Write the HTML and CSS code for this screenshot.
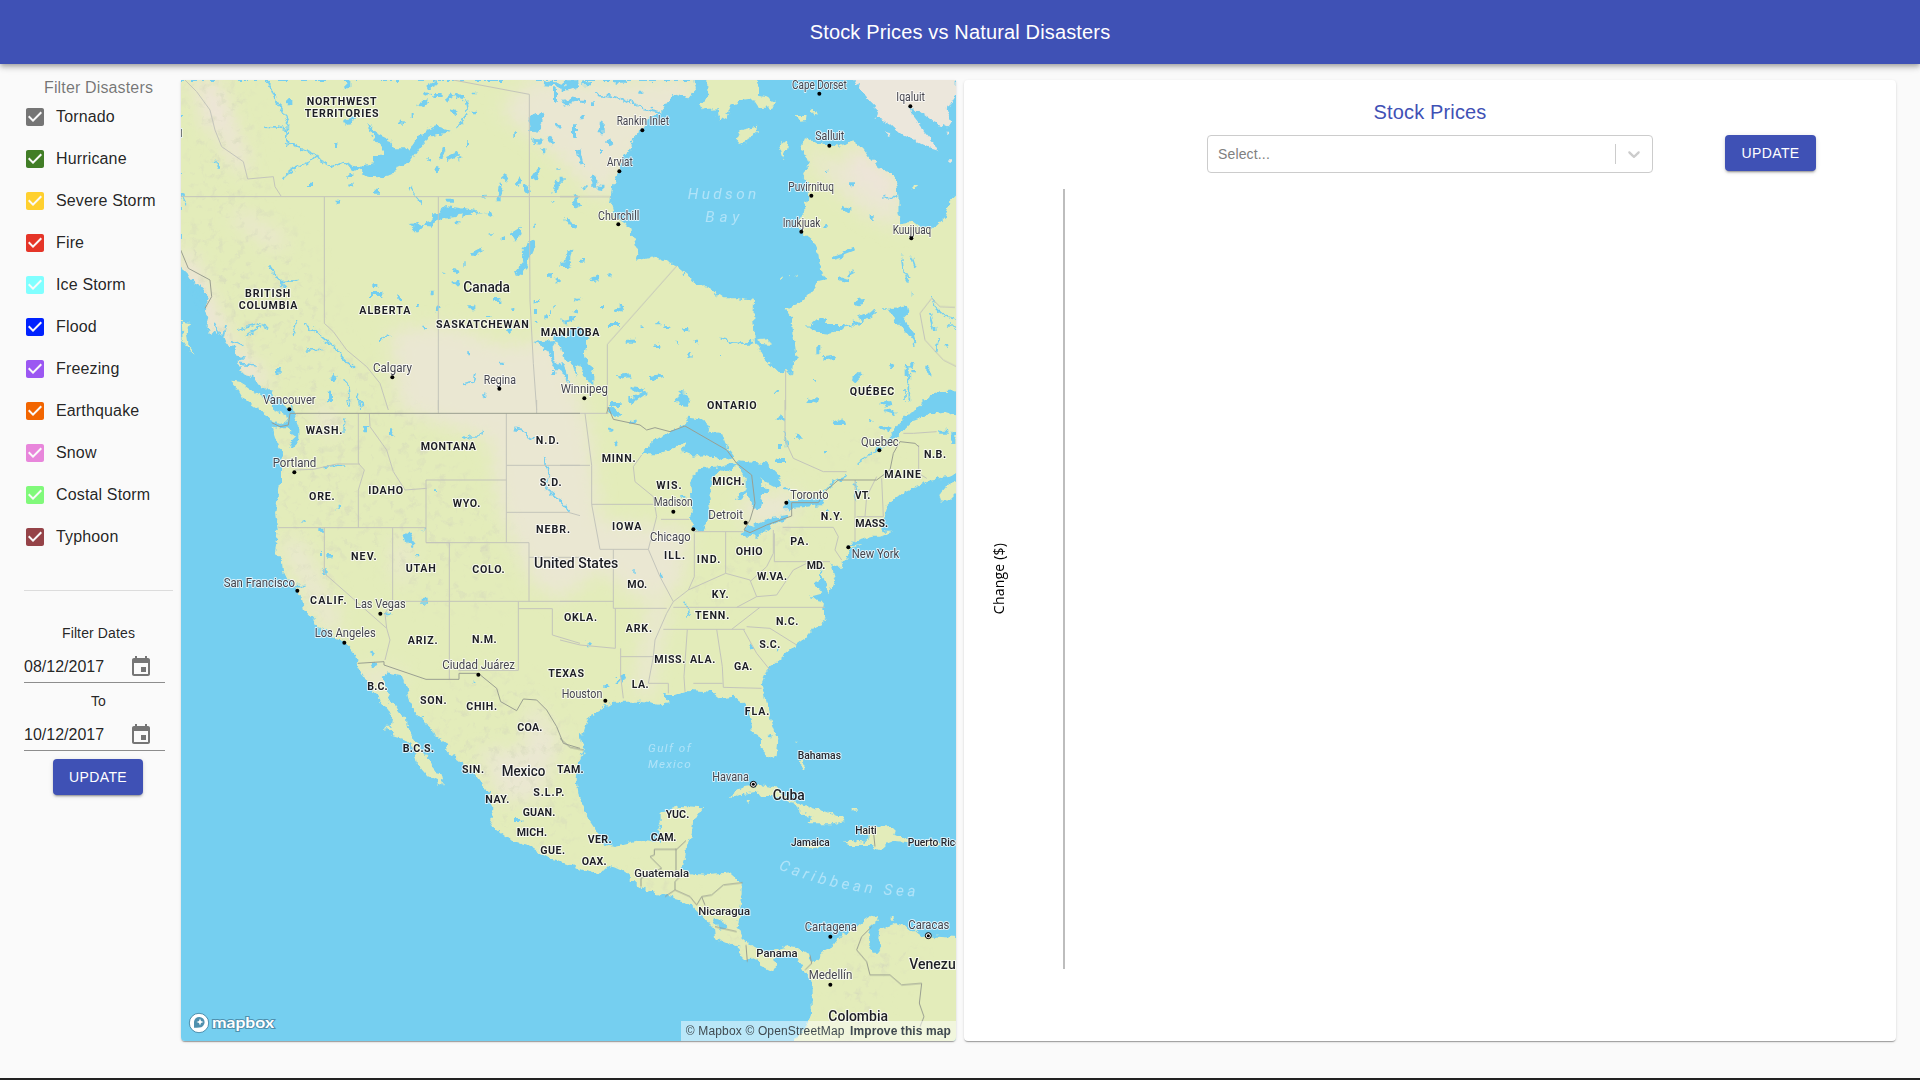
FILE: index.html
```html
<!DOCTYPE html>
<html lang="en">
<head>
<meta charset="utf-8">
<title>Stock Prices vs Natural Disasters</title>
<link rel="stylesheet" href="styles.css">
</head>
<body>
<svg width="0" height="0" class="sprite">
  <symbol id="check" viewBox="0 0 24 24"><path d="M19 3H5c-1.11 0-2 .9-2 2v14c0 1.1.89 2 2 2h14c1.11 0 2-.9 2-2V5c0-1.1-.89-2-2-2zm-9 14l-5-5 1.41-1.41L10 14.17l7.59-7.59L19 8l-9 9z"/></symbol>
  <symbol id="event" viewBox="0 0 24 24"><path d="M17 12h-5v5h5v-5zM16 1v2H8V1H6v2H5c-1.11 0-1.99.9-1.99 2L3 19c0 1.1.89 2 2 2h14c1.1 0 2-.9 2-2V5c0-1.1-.9-2-2-2h-1V1h-2zm3 18H5V8h14v11z"/></symbol>
</svg>
<header class="app-bar"><h1>Stock Prices vs Natural Disasters</h1></header>
<main class="content">
  <aside class="sidebar">
    <h2 class="legend">Filter Disasters</h2>
    <ul class="filters">
      <li class="tornado"><svg><use href="#check"/></svg>Tornado</li>
      <li class="hurricane"><svg><use href="#check"/></svg>Hurricane</li>
      <li class="severe"><svg><use href="#check"/></svg>Severe Storm</li>
      <li class="fire"><svg><use href="#check"/></svg>Fire</li>
      <li class="ice"><svg><use href="#check"/></svg>Ice Storm</li>
      <li class="flood"><svg><use href="#check"/></svg>Flood</li>
      <li class="freezing"><svg><use href="#check"/></svg>Freezing</li>
      <li class="earthquake"><svg><use href="#check"/></svg>Earthquake</li>
      <li class="snow"><svg><use href="#check"/></svg>Snow</li>
      <li class="costal"><svg><use href="#check"/></svg>Costal Storm</li>
      <li class="typhoon"><svg><use href="#check"/></svg>Typhoon</li>
    </ul>
    <hr class="divider">
    <div class="dates">
      <p>Filter Dates</p>
      <div class="date"><span>08/12/2017</span><svg><use href="#event"/></svg></div>
      <p>To</p>
      <div class="date"><span>10/12/2017</span><svg><use href="#event"/></svg></div>
      <button class="btn">UPDATE</button>
    </div>
  </aside>

  <section class="map">
  <svg class="map-canvas" viewBox="181 80 775 961">
    <defs>
      <filter id="rough" filterUnits="userSpaceOnUse" x="150" y="50" width="840" height="1020"><feTurbulence type="fractalNoise" baseFrequency=".14" numOctaves="3" seed="4"/><feDisplacementMap in="SourceGraphic" scale="8" xChannelSelector="R" yChannelSelector="G"/></filter>
      <filter id="soft" filterUnits="userSpaceOnUse" x="100" y="0" width="940" height="1120"><feGaussianBlur stdDeviation="9"/></filter>
      <filter id="relief" filterUnits="userSpaceOnUse" x="100" y="0" width="940" height="1120"><feTurbulence type="fractalNoise" baseFrequency=".11" numOctaves="3" seed="9"/><feColorMatrix values="0 0 0 0 .66  0 0 0 0 .68  0 0 0 0 .5  2 0 0 0 -1.08" result="n"/><feGaussianBlur in="SourceAlpha" stdDeviation="9" result="m"/><feComposite in="n" in2="m" operator="in"/></filter>
      <clipPath id="land-clip">
        <path transform="translate(180 80) scale(.33333)" d="M0,0H1200V990H348L338,975 325,985 310,975 300,958 275,945 278,925 250,925 235,905 215,890 195,885 178,868 175,850 192,832 172,825 165,800 140,795 130,770 105,750 92,765 80,735 85,715 72,690 88,665 70,630 55,612 30,600 20,580 0,560Z"/>
        <path transform="translate(560 80) scale(.33333)" d="M0,0H400L405,30 385,55 340,45 320,70 300,95 255,125 245,150 220,170 205,215 185,235 178,275 160,310 153,370 165,410 205,435 225,490 235,520 228,545 285,530 350,558 385,585 405,608 455,630 490,655 530,655 582,662 580,720 585,790 610,830 640,860 665,885 680,865 697,885 698,860 710,830 700,760 693,710 677,688 720,668 750,640 775,605 798,600 780,565 775,520 755,480 725,455 710,430 730,395 745,360 740,300 725,295 745,250 725,200 735,178 770,185 800,195 840,200 875,180 910,205 935,240 960,265 1010,290 1015,350 1015,400 1025,430 1055,425 1075,440 1130,440 1155,415 1165,370 1200,335V990H0Z"/>
        <path transform="translate(180 400) scale(.33333)" d="M330,-20L345,55 355,80 355,120 340,140 330,130 345,115 325,85 300,85 275,80 285,110 303,155 300,200 300,250 285,340 295,400 285,455 305,480 310,520 350,560 355,585 370,600 375,630 400,660 410,680 440,690 450,705 495,725 525,760 530,790 555,835 575,865 600,900 625,930 640,960 640,1000H685L680,975 660,940 635,905 620,870 605,830 620,820 670,830 685,880 695,925 720,950 760,985 760,1000H1200V-20Z"/>
        <path transform="translate(560 400) scale(.33333)" d="M0,0H1200V210L1170,230 1100,240 1080,255 1030,275 1000,300 980,320 975,350 965,365 975,395 1000,395 960,410 940,410 880,425 865,440 905,435 870,450 858,480 840,500 822,500 810,490 825,545 820,560 805,565 810,585 800,570 790,535 785,520 780,545 760,550 755,540 790,580 750,590 775,600 795,625 800,655 765,680 740,710 700,740 650,785 620,810 605,850 615,900 625,935 645,1000H580L570,950 555,915 525,890 480,895 455,875 390,870 350,885 310,885 330,910 300,915 240,905 160,905 115,935 85,950 70,1000H0Z"/>
        <path transform="translate(180 720) scale(.33333)" d="M733,0L755,15 765,45 805,75 800,95 830,115 850,130 850,150 890,170 915,205 930,210 925,240 940,265 930,300 945,325 990,360 1050,380 1110,415 1160,430 1200,452V255L1190,180 1195,110 1200,80V0Z"/>
        <path transform="translate(560 720) scale(.33333)" d="M0,0H80L58,30 62,70 75,90 50,130 50,190 60,245 80,285 110,330 115,365 165,378 240,360 300,365 295,330 305,310 305,275 370,258 428,262 400,300 395,345 388,370 378,380 375,420 365,450 400,462 450,465 510,460 545,490 545,520 538,560 535,590 530,620 545,650 580,680 620,700 680,680 715,685 745,705 760,730 775,715 785,695 815,680 850,640 890,620 935,590 955,585 955,600 930,620 925,640 925,670 935,695 955,695 965,680 955,650 960,630 1010,612 1050,625 1080,650 1130,650 1200,655V990H700L710,950 740,915 755,880 755,800 750,780 720,730 700,700 655,705 640,725 655,745 640,755 600,735 600,725 580,715 555,720 540,705 535,680 500,670 465,655 462,625 430,590 400,560 385,548 320,530 260,510 240,500 195,455 150,435 130,455 95,460 30,435 0,425Z"/>
      </clipPath>
    </defs>
    <rect class="sea" x="181" y="80" width="775" height="961"/>
    <g filter="url(#rough)">
      <!-- mainland -->
      <g clip-path="url(#land-clip)">
        <rect class="land" x="150" y="60" width="850" height="1000"/>
        <g filter="url(#soft)">
          <path class="plain" d="M390,330L450,325 500,345 560,340 580,400 590,430 600,520 690,530 680,590 640,600 600,570 560,600 530,580 500,510 490,440 400,410Z"/>
          <path class="plain" d="M530,80H690V120L640,150 600,200 560,160 500,110Z M800,150L900,180 900,230 860,210Z M280,540L300,540 340,620 330,640Z M395,540H408V580H395Z M360,670H400V685H360Z M530,700L560,740 540,800 520,780Z M480,750H540V800H500Z M650,600L670,600 650,700 635,690Z M740,500L800,490 790,520 745,525Z"/>
          <path class="rock" d="M185,80L220,85 250,170 235,170 210,110Z M181,240L200,270 230,340 270,380 255,390 220,350 181,290Z M235,210L285,240 280,250 235,220Z M200,90L215,90 215,130 205,130Z M850,140L900,180 890,200 850,170Z M660,80L700,80 690,90Z M310,400L340,420 330,440Z"/>
        </g>
        <path filter="url(#relief)" d="M185,80L250,80 265,200 310,250 350,350 400,400 470,480 510,530 500,610 430,610 380,560 340,560 330,620 300,600 280,520 270,410 220,350 185,280Z M460,660L560,690 590,820 560,860 480,830 400,780Z M640,870L760,940 740,960 640,890Z M850,920L880,920 880,1040 830,1040Z M900,920L930,930 900,980 860,980Z M680,590L800,510 810,540 700,620Z M820,460L880,430 890,460Z"/>
      </g>
      <!-- islands -->
      <g transform="translate(180 80) scale(.33333)" class="land"><path d="M150,905L170,925 185,950 200,965 235,990 262,1005 270,1020 300,1032 320,1025 315,1005 290,995 275,970 250,952 215,930 185,908Z M5,725L30,730 20,755 25,795 50,828 30,812 8,780Z"/></g>
      <g transform="translate(560 80) scale(.33333)" class="land">
        <path class="tundra" d="M880,-10L900,30 930,65 955,90 950,115 990,130 1030,165 1070,185 1110,205 1135,212 1120,185 1090,150 1060,110 1045,80 1080,95 1120,125 1160,145 1175,125 1160,90 1190,40V-10Z M1165,235h14v10h-14zM1162,152h8v8h-8zM975,155l16,5 -6,8z"/>
        <path d="M445,-10L445,45 420,75 425,88 470,85 475,122 500,110 515,75 545,60 580,55 600,85 640,80 645,70 620,55 600,50 600,25 585,-10Z M530,180L545,150 590,140 590,155 570,180 540,192Z M655,200L665,183 682,185 678,215 668,235Z M710,105L740,105 738,120 722,122Z M752,88L768,92 770,104 758,100Z M595,778L625,775 635,795 600,792Z M1055,330L1062,315 1074,315 1065,330Z M662,600l10,-8 -2,8zM686,582l8,-2 -3,6zM700,590h6v5z"/>
      </g>
      <path class="land" transform="translate(560 400) scale(.33333)" d="M1200,240L1160,255 1135,285 1140,300 1165,305 1200,270Z"/>
      <path class="land" transform="translate(180 720) scale(.33333)" d="M640,-10L635,20 610,20 640,45 670,55 700,85 710,130 740,165 770,180 775,200 792,190 785,160 765,155 750,120 725,90 700,55 680,25 678,-10Z"/>
      <path class="land" transform="translate(560 720) scale(.33333)" d="M570,-10L600,60 600,80 635,115 650,105 655,60 640,20 632,-10Z M510,235L520,215 560,200 600,195 650,205 690,240 720,250 760,265 800,275 840,290 857,303 820,310 745,310 760,290 720,280 715,260 680,240 640,228 600,228 590,215 545,222Z M553,242L570,242 565,255Z M848,365L870,362 915,368 930,350 905,340 900,325 940,318 990,315 1005,330 1000,345 1040,355 1060,368 1000,362 975,372 955,390 935,375 870,375Z M1070,362L1140,365 1135,378 1070,376Z M715,372L760,368 795,380 740,386Z M720,125h10v25h-8zM875,267h18v5h-18zM757,70l5,8zM708,62h5v5z M992,590h12v12h-12z"/>
    </g>
    <!-- lakes, rivers and inlets -->
    <g filter="url(#rough)" class="water">
      <g transform="translate(180 80) scale(.33333)">
        <path d="M558,125L585,155 625,175 645,205 690,205 715,170 735,150 770,138 815,152 800,162 755,168 735,185 710,215 690,245 655,260 645,280 600,292 560,290 540,275 500,255 545,260 580,250 585,228 612,222 600,195 575,165Z M735,438L760,405 795,378 845,385 920,400 860,402 800,412 765,425 758,440Z M690,435L710,432 730,440 712,460Z M1040,490L1065,478 1065,500 1045,545 1030,575 1010,590 1005,575 1030,545 1025,510Z M990,460L1022,440 1025,462 1005,485Z M1045,120L1065,100 1095,95 1085,130 1070,158 1050,145Z M1060,785L1130,780 1118,800 1120,845 1160,870 1168,915 1150,885 1120,860 1105,815Z M1145,790L1175,745 1200,740 1230,770 1205,840 1180,835 1165,800Z M870,520L905,502 908,515 885,528Z"/>
        <path class="river" d="M260,-5L283,50 305,90 323,130 320,185 350,200 410,225 415,240 455,262 490,245 545,270 M250,138L300,142 323,150 M410,225L385,250 340,268 312,292 M690,318L700,340 725,368 M265,555L300,605 355,602 M300,605L318,620 M175,750L230,730 265,745 M195,770L240,740 M860,55L865,100 830,145 M0,335L20,375 M105,240L118,265 M460,800L490,835 525,868 M350,715L340,765 M510,980L505,930 498,900 M540,990L532,940 M380,810L425,808 M205,905L250,930 M848,913L880,905 885,880 M600,782L630,765 M375,730L460,800 M5,565L15,610 45,650 60,700 M25,600L50,635 45,670 M30,600L62,650 70,690 M135,735L130,770 M150,780L190,800 M105,730L120,760 M180,850L225,855"/>
        <path class="lakes" d="M505,0v25M515,118h12M490,128l30,-6M505,285h15M515,315l-10,2M585,335h15M467,368h18M390,305v16M328,60v10M460,195h12M665,120v12M695,105h6M745,235v8M580,618h12M570,642h40M755,635v8M655,655h8M705,678h8M745,20l30,-15M760,45h25M715,75l30,-12M795,60l20,-15M825,45l25,10M820,90l8,12M860,65h8M885,35v5M882,95v8M735,40l12,8M795,205l-15,35M800,235l35,-15M770,275l8,-15M855,190h6M838,238v-6M1000,165h8M1060,182l25,3M1105,170l12,20M1125,25v40M1130,140l8,-8M1150,75l20,-8M1175,55l20,5M1185,145v25M1095,10l60,5M1160,25l35,-12M1090,205v18M965,290l20,10M965,315l-8,40M1020,295l-10,20M1035,315l10,25M1080,270l-20,28M1135,300l-12,40M1120,360v5M905,350h12M800,362h18M950,358h12M935,403l-15,8M830,427h8M935,460v4M965,475h4M1060,440h5M1168,430l20,8M1172,510l-15,35M1145,555h15M1110,580v10M1130,595v15M1135,265v4M820,565v15M815,610h20M835,600v12M790,578v3M850,553h4M825,565l10,18M940,660h18M780,680l-8,20M865,682h18M1000,685v8M1070,660v5M1065,690v12M1120,682h5M1090,715h12M1070,725v6M1110,700h6M1150,725l25,-5M995,745l-8,10M925,705v6M293,870v15M865,820h5M965,845v6M910,943h6M730,740h8M465,885l-10,18M450,935v35M1090,800l25,5M1120,870v15"/>
      </g>
      <g transform="translate(560 80) scale(.33333)">
        <path d="M-20,765L60,772 75,840 100,880 100,915 82,905 65,860 40,850 10,835 0,800Z M0,850L15,850 25,900 20,910Z M35,850L50,845 45,890Z M348,960L360,935 382,940 382,980 355,975Z M1085,990L1100,960 1130,935 1200,930V990Z M740,742L770,715 800,715 795,735 850,735 860,745 810,758 770,755 755,748Z M985,690L1040,675 1045,700 1030,715 1065,760 1070,800 1050,770 1010,725Z"/>
        <path class="river" d="M105,42L160,50 200,60 250,85 300,95 M475,778L530,790 580,788 M1025,530L1030,580 1045,605 M1055,530L1065,558 M1115,650L1125,680 1165,715 1190,720 M1165,730L1190,755 M1110,700L1125,750 M1135,770L1130,815 M970,350L1015,350 M850,740L900,725 950,695 M1048,880v85 M1035,930v35"/>
        <path class="lakes" d="M5,25h25M10,65l50,-8M60,65h15M90,70h15M15,10h40M70,10h20M170,5h30M235,35h12M45,130v30M125,125v35M140,190l15,-5M120,215h6M65,105v10M55,210l12,45M100,290v30M5,290v15M70,325h10M110,322l20,2M40,350l15,30M15,420l20,15M45,430v10M25,510v30M5,555l25,-5M60,545h8M95,598l20,-6M145,582l10,2M50,662l8,-5M30,715h15M40,690l12,5M120,678h12M165,692l25,-10M150,735h30M245,738h6M292,730v6M310,738h18M370,750h12M200,782h28M280,795h18M345,788h8M405,785v8M388,827h10M480,822h3M175,892l35,-6M270,895l40,-8M215,925l35,5M150,972h35M215,965l45,-30M845,383l25,8M870,313h12M935,405v12M790,438h10M800,272v4M820,535l30,-8M850,520l30,-12M840,598l25,5M860,585l25,-12M880,670l35,-8M900,715l45,-20M975,685v4M880,730l20,5M775,795v25M790,835l35,-5M765,905v-5M880,905l20,-22M745,958l30,8M650,930v6M990,855l10,5M1040,855v30M1060,870v10M1105,860v30M975,975l20,-8M1048,588v3M1055,638h3M1160,797h5M1048,850l12,8"/>
      </g>
      <g transform="translate(180 400) scale(.33333)">
        <path d="M670,400L690,402 695,415 710,432 700,442 680,430Z M430,395h-12v-12h12zM430,508h10v14h-10zM630,88h10v20h-10zM550,78h14v16h-14z"/>
        <path class="river" d="M498,55L495,90 485,100 M845,120L865,108 900,108 905,90 M1003,85L1025,88 1040,110 1065,118 M1097,165L1105,220 1098,265 1130,290 1165,335 M340,560L378,560 M430,202L490,198 M612,640L635,640 M540,0l8,20 M498,0l5,20 M450,0v8"/>
        <path class="lakes" d="M370,362v6M470,323h10M448,465v8M420,462h6M765,265v8M728,385h4M712,465v4M725,602h18M575,755l5,8M580,790l5,10M878,845h5M345,70v40M340,130l-8,5"/>
      </g>
      <g transform="translate(560 400) scale(.33333)">
        <path d="M243,160L300,110 375,75 385,50 420,55 450,75 445,95 490,100 500,130 505,150 520,170 490,180 440,165 400,170 365,155 385,125 340,145 300,160Z M390,245L415,205 470,200 510,190 540,195 500,215 475,210 455,235 445,290 450,330 440,370 425,395 400,390 390,360 395,300Z M525,180L620,190 655,225 670,260 650,265 620,250 600,235 610,260 625,275 605,290 600,325 580,330 570,300 560,280 540,300 525,300 535,280 560,265 560,235 540,210Z M545,405L555,385 600,370 640,350 690,345 690,355 650,370 620,390 590,410Z M665,325L690,300 740,300 795,295 790,315 740,320 690,325Z M1090,-5H1200V50L1150,35 1100,45 1060,60 1010,110 985,130 990,110 1020,70 1050,35 1080,20Z M140,25L160,20 190,50 160,50Z M350,0L385,0 380,20 355,15Z M815,65L850,55 858,75 820,75Z"/>
        <path class="river" d="M790,280L820,245 862,230 M985,125L940,155 893,188 M378,605L388,650 M885,240L890,275 885,300 M0,305L25,335 M785,500L780,560 M675,100l5,40"/>
        <path class="lakes" d="M145,92h12M165,130l8,-5M210,65h20M205,0h12M655,50l20,10M650,180h25M705,110h20M798,150v10M660,135v12M925,60h12M960,80l30,8M965,10h20M680,265v6M370,285v8M220,515h4M270,532h3M300,530h8M185,825l8,18M130,858h15M170,840h8M80,730h12M570,735l8,8M650,745h5M310,885h10M1135,95h30M1180,95v40M1005,40l-30,-10M795,340h6M590,200h10M1102,240v6"/>
      </g>
      <g transform="translate(180 720) scale(.33333)"><path class="lakes" d="M1002,300h22"/></g>
      <g transform="translate(560 720) scale(.33333)"><path d="M455,590L480,598 498,622 485,630 462,612Z M625,42h12v16h-12zM930,655L945,650 968,680 960,695 940,692Z"/></g>
    </g>
    <!-- borders -->
    <g class="borders">
      <path transform="translate(180 80) scale(.33333)" d="M0,350H1200 M433,350V730L460,755 500,810 560,860 600,910 625,990 M775,350V990 M820,0L1048,43V350L1050,660 1060,850 1070,990 M15,0L50,35 90,90 105,150 125,200 190,245 203,297 280,290 285,320 303,348"/>
      <path transform="translate(560 80) scale(.33333)" d="M0,350H153 M350,558L142,793V990 M677,870V990 M1115,655L1140,680 1185,682 M1115,655L1080,700 1095,780 1150,840 1190,860"/>
      <path transform="translate(180 400) scale(.33333)" d="M535,40V190L553,210 535,270V383 M345,210L400,208 470,192H540 M295,383H738 M433,383V520L620,685 630,720 615,780 M638,383V605 M568,40L570,80 620,150 640,215 675,270 740,265 M738,240V428H808V838 M738,240H979 M979,40V428 M979,196H1200 M979,337H1165L1200,347 M738,428H1047V605 M620,604H1200 M1015,604V811H835 M1015,626H1117V705L1200,730 M638,604L615,640 620,685 M1047,472H1200 M775,0V40 M1070,0V40"/>
      <path transform="translate(560 400) scale(.33333)" d="M0,40H145 M75,40L95,196V313H280 M0,196H90 M95,313L120,448H265 M245,165L220,200 225,245 280,290 290,350 265,448 300,530 340,605 320,640 M303,358H388 M400,395H550 M403,400V530L385,570 340,605 M497,395V520L385,570 M497,520L570,540 590,590 530,622 M640,390V460L620,500 570,545 M643,485H810 M668,382H820L835,410 825,450 845,480 M643,400V485 M160,448V625H320 M0,604H160 M166,625V745L60,735 0,720 M320,640L285,720 280,770 265,850H325V880 M182,770H280 M182,745V830L190,895 M340,622H795 M600,622L515,688 M310,688H555 M382,688L372,830 375,875 M470,688L487,800 490,862 605,865 M400,850H488 M550,688L590,760 630,810 M560,680L630,685 710,735 M590,590L650,585 700,510 740,490 M885,240V425 M950,230L920,290 915,350 M890,350H970 M965,235L970,350 M675,0V120L700,175 790,215 860,215 M1030,100L1060,100 1130,95 M1076,135V220L1100,235"/>
    </g>
    <g class="borders national">
      <path transform="translate(180 80) scale(.33333)" d="M0,505L25,565 90,600 95,650 75,685"/>
      <path transform="translate(180 400) scale(.33333)" d="M275,68L300,80 325,75 330,40H1200 M533,790L612,785V795L738,838H837V820H895L950,865 962,905 1010,932 1030,897 1070,900 1100,930 1130,980 1150,1030 1200,1045"/>
      <path transform="translate(560 400) scale(.33333)" d="M140,40L145,22 160,58 240,75 260,90 285,83 330,95 375,78 500,150 530,190 575,225 585,310 570,360 552,390 570,398 620,375 695,348V308H775L800,270 835,240H950L990,210 1000,160 1020,125 1065,130 1076,140"/>
      <path transform="translate(560 720) scale(.33333)" d="M0,55L30,82 70,90 M348,385V460 M283,388H350L378,362 M283,388V405L270,410 305,445 243,475V500 M365,465L345,485V510L315,530 M345,510L390,530 410,555 425,530 455,525 490,495 548,488 M425,530L435,555 M465,620L530,635 M558,675L562,725 M750,705L755,730 735,750 M935,620L905,650 890,690 920,725 930,765 990,765 1025,795 1085,790 1078,850 1092,890 1080,920 M940,330L945,380"/>
    </g>
    <!-- labels -->
    <g class="labels">
    <g transform="translate(180 80) scale(.33333)">
      <text class="st" x="380" y="75" textLength="210">NORTHWEST</text><text class="st" x="374" y="111" textLength="222">TERRITORIES</text>
      <text class="st" x="-16" y="172">N</text>
      <text class="st" x="195" y="651" textLength="136">BRITISH</text><text class="st" x="176" y="687" textLength="176">COLUMBIA</text>
      <text class="st" x="538" y="701" textLength="153">ALBERTA</text><text class="st" x="768" y="743" textLength="278">SASKATCHEWAN</text><text class="st" x="1082" y="769" textLength="176">MANITOBA</text>
      <text class="co" x="850" y="637" textLength="140">Canada</text>
      <text class="ci" x="579" y="877" textLength="117">Calgary</text><text class="ci" x="911" y="911" textLength="97">Regina</text><text class="ci" x="249" y="971" textLength="158">Vancouver</text><text class="ci" x="1142" y="939" textLength="142">Winnipeg</text>
      <circle cx="637" cy="892" r="6"/><circle cx="958" cy="926" r="6"/><circle cx="328" cy="988" r="6"/><circle cx="1213" cy="955" r="6"/>
    </g>
    <g transform="translate(560 80) scale(.33333)">
      <text class="ci" x="696" y="27" textLength="164">Cape Dorset</text><text class="ci" x="1009" y="63" textLength="86">Iqaluit</text><text class="ci" x="170" y="136" textLength="157">Rankin Inlet</text><text class="ci" x="766" y="181" textLength="87">Salluit</text><text class="ci" x="141" y="259" textLength="77">Arviat</text><text class="ci" x="685" y="334" textLength="137">Puvirnituq</text><text class="ci" x="114" y="419" textLength="124">Churchill</text><text class="ci" x="668" y="440" textLength="113">Inukjuak</text><text class="ci" x="998" y="462" textLength="116">Kuujjuaq</text>
      <circle cx="778" cy="41" r="6"/><circle cx="1051" cy="79" r="6"/><circle cx="247" cy="151" r="6"/><circle cx="808" cy="197" r="6"/><circle cx="178" cy="274" r="6"/><circle cx="754" cy="347" r="6"/><circle cx="175" cy="433" r="6"/><circle cx="724" cy="455" r="6"/><circle cx="1054" cy="475" r="6"/>
      <text class="sea-label big" x="383" y="358" textLength="206">Hudson</text><text class="sea-label big" x="436" y="427" textLength="102">Bay</text>
      <text class="st" x="869" y="945" textLength="134">QUÉBEC</text><text class="st" x="441" y="988" textLength="149">ONTARIO</text>
    </g>
    <g transform="translate(180 400) scale(.33333)">
      <text class="st" x="377" y="102" textLength="110">WASH.</text><text class="st" x="722" y="151" textLength="166">MONTANA</text><text class="st" x="1067" y="132" textLength="70">N.D.</text><text class="st" x="1079" y="258" textLength="66">S.D.</text><text class="st" x="387" y="299" textLength="77">ORE.</text><text class="st" x="565" y="282" textLength="104">IDAHO</text><text class="st" x="818" y="322" textLength="83">WYO.</text><text class="st" x="1068" y="400" textLength="102">NEBR.</text><text class="st" x="513" y="481" textLength="77">NEV.</text><text class="st" x="677" y="517" textLength="90">UTAH</text><text class="st" x="877" y="520" textLength="97">COLO.</text><text class="st" x="390" y="612" textLength="110">CALIF.</text><text class="st" x="683" y="732" textLength="90">ARIZ.</text><text class="st" x="876" y="728" textLength="74">N.M.</text><text class="st" x="1105" y="830" textLength="107">TEXAS</text><text class="st" x="562" y="871" textLength="61">B.C.</text><text class="st" x="720" y="912" textLength="80">SON.</text><text class="st" x="859" y="931" textLength="92">CHIH.</text>
      <text class="co" x="1062" y="505" textLength="253">United States</text>
      <text class="ci" x="278" y="200" textLength="131">Portland</text><text class="ci" x="131" y="562" textLength="214">San Francisco</text><text class="ci" x="525" y="623" textLength="152">Las Vegas</text><text class="ci" x="404" y="711" textLength="183">Los Angeles</text><text class="ci" x="787" y="806" textLength="218">Ciudad Juárez</text>
      <circle cx="343" cy="217" r="6"/><circle cx="352" cy="572" r="6"/><circle cx="601" cy="641" r="6"/><circle cx="493" cy="728" r="6"/><circle cx="895" cy="824" r="6"/>
    </g>
    <g transform="translate(560 400) scale(.33333)">
      <text class="st" x="125" y="187" textLength="102">MINN.</text><text class="st" x="289" y="266" textLength="76">WIS.</text><text class="st" x="457" y="256" textLength="97">MICH.</text><text class="st" x="1092" y="173" textLength="66">N.B.</text><text class="st" x="973" y="233" textLength="110">MAINE</text><text class="st" x="884" y="298" textLength="47">VT.</text><text class="st" x="782" y="360" textLength="66">N.Y.</text><text class="st" x="886" y="380" textLength="98">MASS.</text><text class="st" x="156" y="390" textLength="88">IOWA</text><text class="st" x="691" y="436" textLength="55">PA.</text><text class="st" x="312" y="478" textLength="63">ILL.</text><text class="st" x="410" y="488" textLength="71">IND.</text><text class="st" x="527" y="466" textLength="81">OHIO</text><text class="st" x="740" y="507" textLength="56">MD.</text><text class="st" x="591" y="540" textLength="90">W.VA.</text><text class="st" x="202" y="564" textLength="59">MO.</text><text class="st" x="455" y="593" textLength="51">KY.</text><text class="st" x="405" y="658" textLength="103">TENN.</text><text class="st" x="12" y="662" textLength="99">OKLA.</text><text class="st" x="197" y="696" textLength="79">ARK.</text><text class="st" x="648" y="676" textLength="67">N.C.</text><text class="st" x="598" y="745" textLength="63">S.C.</text><text class="st" x="283" y="788" textLength="93">MISS.</text><text class="st" x="390" y="789" textLength="76">ALA.</text><text class="st" x="522" y="809" textLength="55">GA.</text><text class="st" x="215" y="865" textLength="51">LA.</text><text class="st" x="554" y="944" textLength="74">FLA.</text>
      <text class="ci" x="903" y="137" textLength="113">Quebec</text><text class="ci" x="281" y="319" textLength="117">Madison</text><text class="ci" x="691" y="297" textLength="115">Toronto</text><text class="ci" x="445" y="358" textLength="104">Detroit</text><text class="ci" x="270" y="423" textLength="122">Chicago</text><text class="ci" x="875" y="475" textLength="143">New York</text><text class="ci" x="5" y="893" textLength="122">Houston</text>
      <circle cx="958" cy="151" r="6"/><circle cx="340" cy="335" r="6"/><circle cx="679" cy="308" r="6"/><circle cx="557" cy="368" r="6"/><circle cx="400" cy="388" r="6"/><circle cx="865" cy="442" r="6"/><circle cx="136" cy="902" r="6"/>
    </g>
    <g transform="translate(180 720) scale(.33333)">
      <text class="st" x="1012" y="34" textLength="75">COA.</text><text class="st" x="668" y="97" textLength="94">B.C.S.</text><text class="st" x="846" y="160" textLength="66">SIN.</text><text class="st" x="1131" y="160" textLength="80">TAM.</text><text class="st" x="1060" y="228" textLength="93">S.L.P.</text><text class="st" x="916" y="250" textLength="72">NAY.</text><text class="st" x="1028" y="287" textLength="98">GUAN.</text><text class="st" x="1010" y="349" textLength="91">MICH.</text><text class="st" x="1081" y="401" textLength="74">GUE.</text>
      <text class="co" x="965" y="167" textLength="131">Mexico</text>
    </g>
    <g transform="translate(560 720) scale(.33333)">
      <text class="st" x="317" y="293" textLength="71">YUC.</text><text class="st" x="272" y="363" textLength="77">CAM.</text><text class="st" x="83" y="369" textLength="72">VER.</text><text class="st" x="65" y="435" textLength="75">OAX.</text>
      <text class="sea-label" x="264" y="96" textLength="128">Gulf of</text><text class="sea-label" x="264" y="143" textLength="128">Mexico</text>
      <path id="carib" class="guide" d="M655,447Q850,530 1095,529"/><text class="sea-label big"><textPath href="#carib" textLength="422">Caribbean Sea</textPath></text>
      <text class="sm" x="713" y="118" textLength="130">Bahamas</text><text class="ci" x="457" y="183" textLength="110">Havana</text><text class="co" x="638" y="241" textLength="96">Cuba</text><text class="sm" x="886" y="342" textLength="64">Haiti</text><text class="sm" x="693" y="379" textLength="116">Jamaica</text><text class="sm" x="1043" y="377" textLength="160">Puerto Rico</text><text class="sm" x="223" y="470" textLength="164">Guatemala</text><text class="sm" x="415" y="585" textLength="155">Nicaragua</text><text class="sm" x="589" y="711" textLength="124">Panama</text><text class="ci" x="734" y="632" textLength="157">Cartagena</text><text class="ci" x="1045" y="627" textLength="123">Caracas</text><text class="ci" x="746" y="776" textLength="131">Medellín</text><text class="co" x="1048" y="748" textLength="195">Venezuela</text><text class="co" x="805" y="904" textLength="179">Colombia</text>
      <circle cx="811" cy="650" r="6"/><circle cx="811" cy="794" r="6"/><g class="capital"><circle cx="580" cy="193" r="9"/><circle cx="1105" cy="647" r="9"/></g><circle cx="580" cy="193" r="4.5"/><circle cx="1105" cy="647" r="4.5"/>
    </g>
    </g>
  </svg>
  <svg class="map-logo" viewBox="0 0 94 24"><circle cx="12" cy="12" r="9.7"/><path d="M7 16.8V11a5.3 5.3 0 1 1 5.3 5.5C10 16.7 8.5 16.9 7 16.8Z"/><path class="star" d="M13 7.6l1 2.5 2.5 1-2.5 1-1 2.5-1-2.5-2.5-1 2.5-1z"/><text x="25" y="16.5" textLength="62" lengthAdjust="spacingAndGlyphs">mapbox</text></svg>
  <div class="attribution"><span>© Mapbox</span> <span>© OpenStreetMap</span> <b>Improve this map</b></div>
  </section>

  <section class="panel">
    <h2>Stock Prices</h2>
    <div class="controls">
      <div class="select"><span>Select...</span><i></i><svg viewBox="0 0 20 20"><path d="M4.516 7.548c0.436-0.446 1.043-0.481 1.576 0l3.908 3.747 3.908-3.747c0.533-0.481 1.141-0.446 1.574 0 0.436 0.445 0.408 1.197 0 1.615-0.406 0.418-4.695 4.502-4.695 4.502-0.217 0.223-0.502 0.335-0.787 0.335s-0.57-0.112-0.789-0.335c0 0-4.287-4.084-4.695-4.502s-0.436-1.17 0-1.615z"/></svg></div>
      <button class="btn">UPDATE</button>
    </div>
    <div class="chart"><span class="axis-title">Change ($)</span><div class="axis"></div></div>
  </section>
</main>
<script src="labels.js"></script>
</body>
</html>
```
FILE: labels.js
```javascript
// Place names are condensed as whole glyphs, so that narrow letters never run together.
document.querySelectorAll('.labels .ci, .labels .co, .labels .sm').forEach(function (label) {
  label.setAttribute('lengthAdjust', 'spacingAndGlyphs');
});
```
FILE: styles.css
```css
* { box-sizing: border-box; }
body { margin: 0; height: 1080px; overflow: hidden; display: flex; flex-direction: column; background: #fafafa; border-bottom: 2px solid #222; font-family: "Liberation Sans", Arial, sans-serif; color: rgba(0,0,0,.87); }
h1, h2, p, ul { margin: 0; padding: 0; font-weight: 400; }
.sprite { position: absolute; }
.app-bar { height: 64px; flex: none; display: flex; align-items: center; justify-content: center; background: #3f51b5; color: #fff; box-shadow: 0 2px 4px -1px rgba(0,0,0,.2), 0 4px 5px rgba(0,0,0,.14), 0 1px 10px rgba(0,0,0,.12); }
.app-bar h1 { font-size: 20px; letter-spacing: .15px; }
.content { display: flex; gap: 8px; padding: 16px 24px 0; height: 977px; }

.sidebar { width: 149px; flex: none; }
.legend { font-size: 16px; line-height: 16px; letter-spacing: .15px; color: rgba(0,0,0,.54); text-align: center; }
.filters { list-style: none; margin-left: -1px; }
.filters li { height: 42px; display: flex; align-items: center; gap: 9px; font-size: 16px; line-height: 24px; letter-spacing: .15px; white-space: nowrap; padding-bottom: 1px; }
.filters svg { width: 24px; height: 24px; margin-top: 1px; fill: currentColor; }
.filters use { fill: var(--tone); }
.tornado { --tone: #757575; }
.hurricane { --tone: #417d26; }
.severe { --tone: #ffd02f; }
.fire { --tone: #e53528; }
.ice { --tone: #80ffff; }
.flood { --tone: #0022ff; }
.freezing { --tone: #9b57f2; }
.earthquake { --tone: #f26500; }
.snow { --tone: #e886db; }
.costal { --tone: #80f97a; }
.typhoon { --tone: #954348; }
.divider { margin: 32px 0 0; border: 0; height: 1px; background: #dcdcdc; }
.dates { display: flex; flex-direction: column; padding-top: 32px; }
.dates p { font-size: 14px; line-height: 20px; letter-spacing: .12px; text-align: center; }
.date { width: 141px; height: 40px; display: flex; justify-content: space-between; align-items: center; padding: 8px 12px 0 0; border-bottom: 1px solid #8d8d8d; font-size: 16px; }
.date svg { width: 24px; height: 24px; fill: #757575; }
.date + p { margin-top: 8px; }
.btn { width: 90px; height: 36px; border: 0; border-radius: 4px; padding: 0; background: #3f51b5; color: #fff; font: 14px "Liberation Sans", Arial, sans-serif; letter-spacing: .4px; box-shadow: 0 3px 1px -2px rgba(0,0,0,.2), 0 2px 2px rgba(0,0,0,.14), 0 1px 5px rgba(0,0,0,.12); }
.dates .btn { margin: 8px 0 0 29px; }

.map, .panel { border-radius: 4px; box-shadow: 0 2px 1px -1px rgba(0,0,0,.2), 0 1px 1px rgba(0,0,0,.14), 0 1px 3px rgba(0,0,0,.12); }
.map { position: relative; width: 775px; flex: none; overflow: hidden; border-radius: 0 0 4px 4px; }
.map-canvas { display: block; width: 775px; height: 961px; }
.sea, .water { fill: #75cff0; }
.land { fill: #e3ecba; }
.tundra { fill: #ece7dc; }
.plain { fill: #eae7d2; }
.rock { fill: #eee4da; }
.river, .lakes { fill: none; stroke: #75cff0; }
.river { stroke-width: 5; }
.lakes { stroke-width: 12; }
.borders { fill: none; stroke: #c3c4bb; stroke-width: 3; }
.national { stroke: #9a9f91; }
.labels { font-family: Roboto, "Open Sans", sans-serif; fill: #000; }
.labels text { paint-order: stroke; stroke: rgba(255,255,255,.75); stroke-width: 6px; stroke-linejoin: round; }
.labels .st { font-size: 32px; font-weight: 700; fill: #1d1e24; }
.labels .ci { font-size: 37px; fill: #45454e; }
.labels .sm { font-size: 35px; font-weight: 500; fill: #25252c; }
.labels .co { font-size: 42px; font-weight: 500; fill: #1d1e24; }
.labels .sea-label { font-size: 35px; font-style: italic; fill: #b0e3f8; stroke: none; }
.labels .big { font-size: 46px; }
.labels .guide { fill: none; }
.capital { fill: #fff; stroke: #000; stroke-width: 3; }
.map-logo { position: absolute; left: 6px; bottom: 6px; width: 94px; height: 24px; fill: #fff; stroke: #4e90ae; stroke-width: 1; overflow: visible; }
.map-logo path { fill: #4e90ae; stroke: none; }
.map-logo .star { fill: #fff; }
.map-logo text { font: 700 16px Lato, sans-serif; paint-order: stroke; stroke-width: 2px; }
.attribution { position: absolute; right: 0; bottom: 0; height: 20px; padding: 0 5px; background: rgba(255,255,255,.5); font-size: 12px; line-height: 20px; letter-spacing: .15px; color: #404a50; white-space: nowrap; }
.attribution b { margin-left: 2px; letter-spacing: .1px; }

.panel { flex: 1; background: #fff; display: flex; flex-direction: column; }
.panel h2 { margin-top: 16px; height: 39px; line-height: 32px; font-size: 20px; letter-spacing: .15px; color: #3f51b5; text-align: center; }
.controls { display: flex; gap: 72px; padding-left: 243px; }
.controls .btn { width: 91px; }
.select { width: 446px; height: 38px; border: 1px solid #ccc; border-radius: 4px; display: flex; align-items: center; padding: 0 8px 0 10px; font-size: 14px; letter-spacing: .15px; color: #808080; }
.select span { flex: 1; }
.select i { width: 1px; height: 20px; background: #ccc; margin-right: 8px; }
.select svg { width: 20px; height: 20px; fill: #ccc; }
.chart { display: flex; align-items: center; margin-top: 16px; height: 780px; padding-left: 27px; }
.axis-title { writing-mode: vertical-rl; transform: rotate(180deg); font: 14px/16px "Open Sans", sans-serif; letter-spacing: .2px; color: #000; }
.axis { width: 2px; height: 100%; margin-left: 56px; background: #bdbdbd; }
```
